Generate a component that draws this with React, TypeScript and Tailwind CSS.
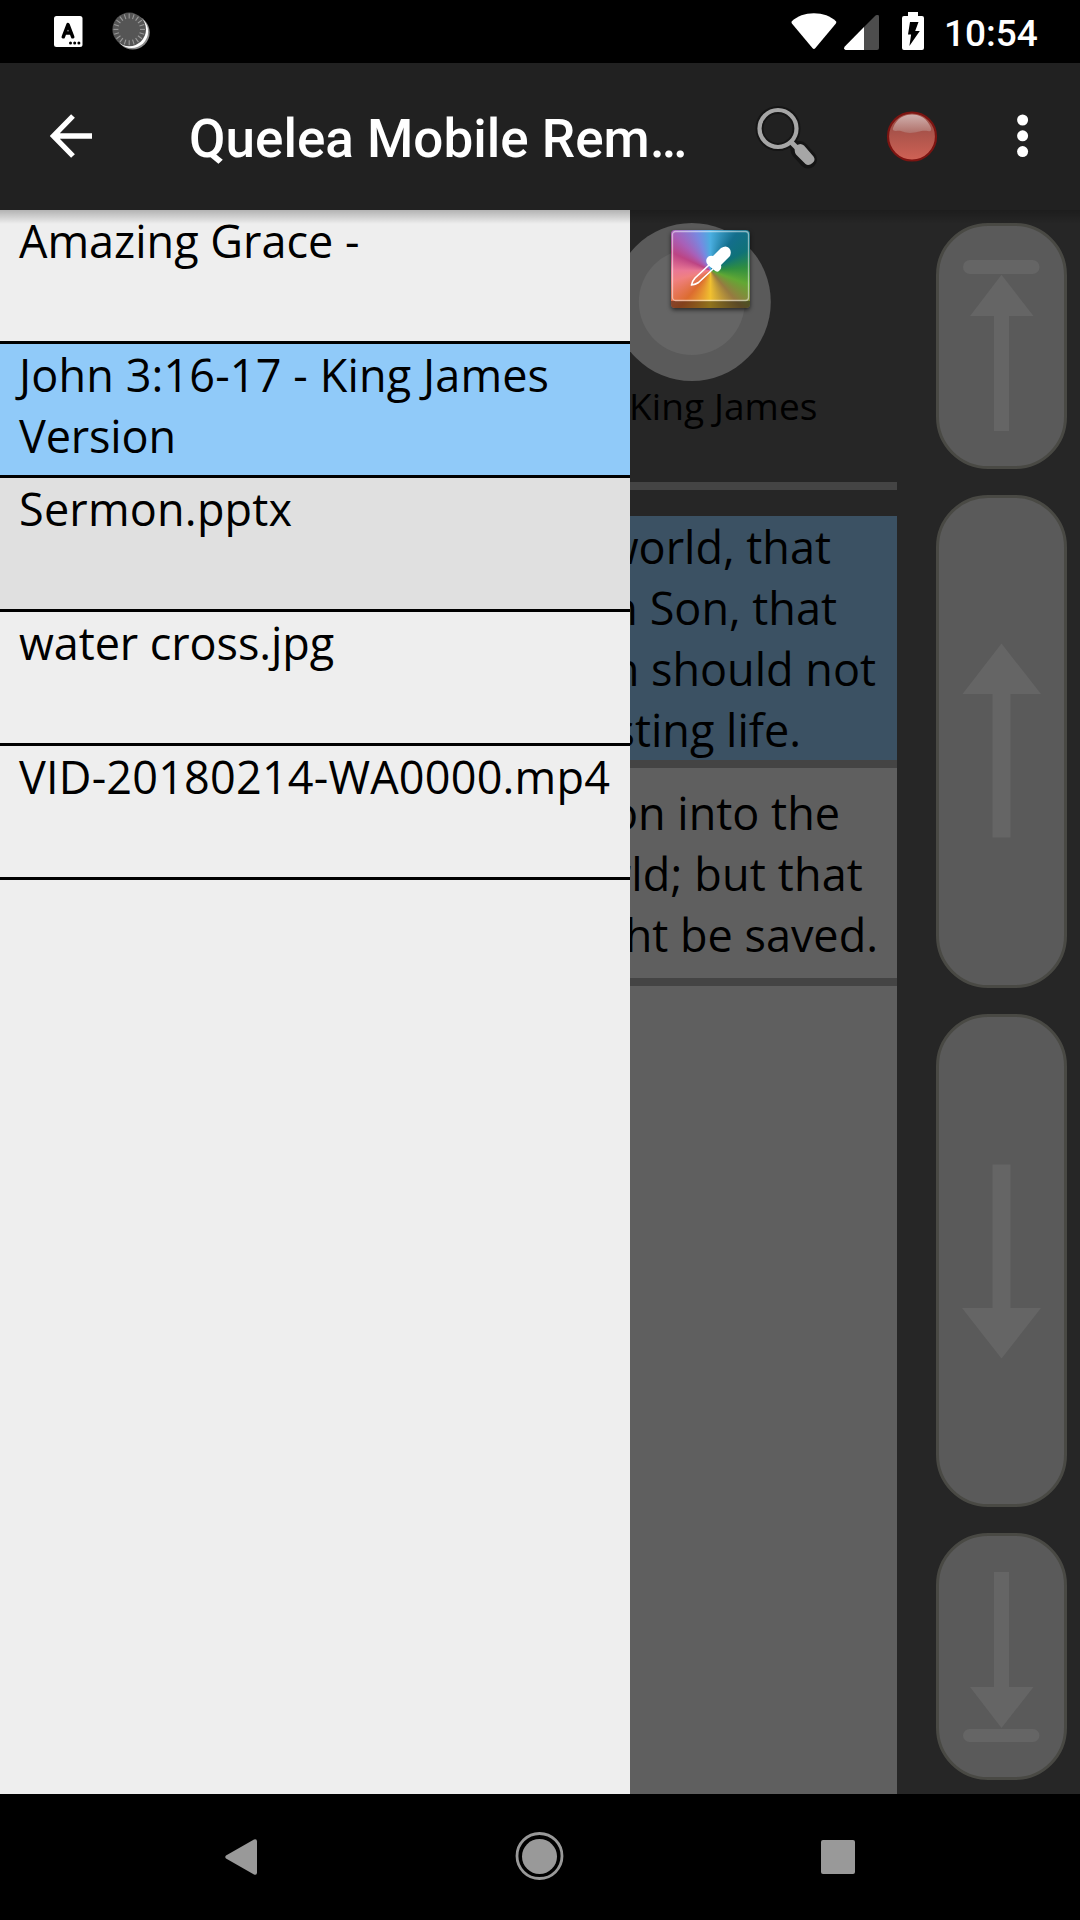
import React from "react";

const items = [
  { lines: [{ text: "Amazing Grace -", track: "tracking-normal" }], bg: "bg-[#eeeeee]" },
  {
    lines: [
      { text: "John 3:16-17 - King James", track: "tracking-[0.13px]" },
      { text: "Version", track: "tracking-[-0.15px]" },
    ],
    bg: "bg-[#90caf9]",
  },
  { lines: [{ text: "Sermon.pptx", track: "tracking-[0.2px]" }], bg: "bg-[#e0e0e0]" },
  { lines: [{ text: "water cross.jpg", track: "tracking-[-0.08px]" }], bg: "bg-[#eeeeee]" },
  { lines: [{ text: "VID-20180214-WA0000.mp4", track: "tracking-[0.2px]" }], bg: "bg-[#eeeeee]" },
];

const verse16 = [
  { text: "world, that", pad: "pr-[66px]" },
  { text: "own Son, that", pad: "pr-[60px]" },
  { text: "him should not", pad: "pr-[21px]" },
  { text: "lasting life.", pad: "pr-[96px]" },
];

const verse17 = [
  { text: "Son into the", pad: "pr-[57px]" },
  { text: "world; but that", pad: "pr-[34px] tracking-[0.15px]" },
  { text: "might be saved.", pad: "pr-[19px]" },
];

function Lines({ lines }: { lines: { text: string; pad: string }[] }) {
  return (
    <>
      {lines.map((l) => (
        <div key={l.text} className={"flex h-[61px] w-full justify-end whitespace-nowrap " + l.pad}>
          {l.text}
        </div>
      ))}
    </>
  );
}

function StatusBar() {
  return (
    <div className="flex h-[63px] shrink-0 items-start bg-black">
      <svg className="ml-[54px] mt-4" width="29" height="31" viewBox="0 0 29 31">
        <rect width="28.5" height="31" rx="2.5" fill="#fff" />
        <path d="M9.3 20.800 14 8.600l4.700 12.200M11 17h6" fill="none" stroke="#000" strokeWidth="3.500" strokeLinecap="round" strokeLinejoin="round" />
        <g fill="#000">
          <circle cx="16.500" cy="27" r="1.500" />
          <circle cx="20.700" cy="27" r="1.500" />
          <circle cx="24.900" cy="27" r="1.500" />
        </g>
      </svg>
      <svg className="ml-[28px] mt-[11px]" width="42" height="42" viewBox="0 0 42 42">
        <circle cx="21.700" cy="21.500" r="17" fill="#8c8c8c" />
        <circle cx="20.500" cy="20.500" r="16.600" fill="#fff" />
        <circle cx="18.200" cy="18.400" r="16.800" fill="#555" />
        <g stroke="#999" strokeWidth="1.100">
          {Array.from({ length: 20 }, (_, i) => (
            <path key={i} d="M18.200 2.600v5" transform={`rotate(${i * 18} 18.200 18.400)`} />
          ))}
        </g>
      </svg>
      <svg className="ml-auto mt-[13px]" width="46" height="37" viewBox="0 0 46 37">
        <path d="M.6 8.400C6.200 3 14 .2 22.900.2s16.700 2.800 22.300 8.200c.2 1.100 0 1.600-.5 2.300L24.200 35.300q-1.300 1.300-2.600 0L1.100 10.700C.6 10 .4 9.500.6 8.400Z" fill="#fff" />
      </svg>
      <svg className="ml-[7px] mt-[15px]" width="35" height="35" viewBox="0 0 35 35">
        <path d="M20 12 31.500.6Q35-1.500 35 2v31q0 2-2 2H20Z" fill="#4d4d4d" />
        <path d="M20 12v23H1.500Q-1 34 .8 31.500Z" fill="#fff" />
      </svg>
      <svg className="ml-[23px] mt-3" width="22" height="38" viewBox="0 0 22 38">
        <path d="M6 0h10v4h4q2 0 2 2v30q0 2-2 2H2q-2 0-2-2V6q0-2 2-2h4Z" fill="#fff" />
        <path d="M8 10h8.500l-3.300 9h4.600L7.400 34l1.700-11.500H6Z" fill="#000" />
      </svg>
      <div className="ml-[20px] mr-[41px] mt-[5px] w-[95px] whitespace-nowrap font-[Roboto] text-[37px] font-medium leading-[57px] text-white">10:54</div>
    </div>
  );
}

function TopBar() {
  return (
    <div className="flex h-[147px] shrink-0 items-center bg-[#212121]">
      <svg className="mb-[2px] ml-[50px]" width="42" height="44" viewBox="0 0 42 44">
        <path d="M42 22H5M23 2 3.500 22 23 42" fill="none" stroke="#fff" strokeWidth="5.300" />
      </svg>
      <div className="ml-[97px] mt-[5px] w-[510px] whitespace-nowrap font-[Roboto] text-[53px] font-medium leading-[70px] text-white">
        Quelea Mobile Rem…
      </div>
      <svg className="ml-[54px]" width="68" height="68" viewBox="0 0 68 68">
        <g stroke="#151515" fill="none">
          <circle cx="25" cy="25.500" r="18.500" strokeWidth="8" />
          <path d="m39 40 6 6" strokeWidth="10" />
          <path d="m46.500 47 8.500 9.500" strokeWidth="18" strokeLinecap="round" />
        </g>
        <g stroke="#a6a6a6" fill="none">
          <circle cx="25" cy="25.500" r="18.500" strokeWidth="4.200" />
          <path d="m37 38 8 8" strokeWidth="5" />
        </g>
        <path d="M42 43.500q5-4.500 9-1l9.500 11q2.500 3.500-1 6.500-4 3.500-7 1L43 51.500q-2-3-1-8Z" fill="#a6a6a6" />
      </svg>
      <svg className="ml-[64px]" width="54" height="54" viewBox="0 0 54 54">
        <defs>
          <linearGradient id="rec" x1="0" y1="0" x2="0" y2="1">
            <stop offset="0.300" stopColor="#a25048" />
            <stop offset="1" stopColor="#d06255" />
          </linearGradient>
          <linearGradient id="gloss" x1="0" y1="0" x2="0" y2="1">
            <stop offset="0" stopColor="#d0b0ae" />
            <stop offset="1" stopColor="#b07069" />
          </linearGradient>
        </defs>
        <circle cx="27" cy="26.500" r="24" fill="url(#rec)" stroke="#7c1411" strokeWidth="2.200" />
        <path d="M8 18C12 8 19 4.500 27 4.500S42 8 46 18q1 4-3 3c-8-1-10 2-18 2-7 0-8-3-14-2q-4 0-3-3Z" fill="url(#gloss)" />
      </svg>
      <svg className="mb-px ml-[77px]" width="14" height="46" viewBox="0 0 14 46">
        <g fill="#fff">
          <circle cx="6.600" cy="7" r="5.500" />
          <circle cx="6.600" cy="22.800" r="5.500" />
          <circle cx="6.600" cy="38.600" r="5.500" />
        </g>
      </svg>
    </div>
  );
}

function Drawer() {
  return (
    <div className="flex w-[630px] shrink-0 flex-col bg-[#eeeeee] text-[45px] leading-[61px] text-black">
      {items.map((it) => (
        <div key={it.lines[0].text} className={"h-[134px] border-b-[3px] border-black pl-[19px] " + it.bg}>
          {it.lines.map((l) => (
            <div key={l.text} className={"whitespace-nowrap " + l.track}>
              {l.text}
            </div>
          ))}
        </div>
      ))}
    </div>
  );
}

function Lyrics() {
  return (
    <div className="flex w-[267px] shrink-0 flex-col overflow-hidden bg-[#5f5f5f] text-[45px] leading-[61px] text-black">
      <div className="h-[306px] shrink-0 bg-[#262626]">
        <div className="relative h-[171px]">
          <svg className="absolute left-0 top-0" width="160" height="171" viewBox="0 0 160 171">
            <circle cx="61.800" cy="92" r="79" fill="#5a5a5a" />
            <circle cx="61.800" cy="92" r="53" fill="#656565" />
          </svg>
          <ColorPicker />
        </div>
        <div className="-ml-px h-[101px] whitespace-nowrap text-[37px] leading-[50px] tracking-[0.1px]">King James</div>
        <div className="h-2 bg-[#444444]" />
      </div>
      <div className="flex h-[252px] shrink-0 flex-col border-b-8 border-[#444444] bg-[#3b5163]">
        <Lines lines={verse16} />
      </div>
      <div className="flex h-[218px] shrink-0 flex-col justify-center border-b-8 border-[#444444]">
        <Lines lines={verse17} />
      </div>
    </div>
  );
}

function ColorPicker() {
  return (
    <div className="absolute left-[41px] top-[20px] h-[78px] w-[79px] overflow-hidden rounded-[4px] shadow-[0_2px_4px_rgba(0,0,0,0.6)]">
      <div className="h-full w-full bg-[conic-gradient(from_0deg_at_50%_52%,#4aaee0_0deg,#136e8c_35deg,#0f7278_60deg,#2f8e40_85deg,#62a834_110deg,#977a40_140deg,#f0c030_180deg,#dc6c30_220deg,#f08080_255deg,#ea7894_270deg,#bc4484_295deg,#a860b8_315deg,#7888e0_340deg,#4aaee0_360deg)]" />
      <div className="absolute bottom-0 left-0 h-[7px] w-full bg-black/40" />
      <svg className="absolute left-0 top-0" width="79" height="78" viewBox="0 0 79 78">
        <rect x="1.500" y="1.500" width="76" height="69" rx="3" fill="none" stroke="#fff" strokeOpacity=".5" strokeWidth="1.300" />
        <path d="M38 35 24 48q-3 3.500-3.500 7 4-.5 7-2.500L42 39" fill="none" stroke="#fff" strokeWidth="1.700" strokeLinejoin="round" />
        <path d="M36 28q2-3 6-2l8-8q5-3 8 0t1 8l-9 9q1 4-2 6-2 2-5-1l-6-5q-3-3-1-7Z" fill="#fff" />
      </svg>
    </div>
  );
}

function NavButtons() {
  const base = "w-[131px] shrink-0 overflow-hidden rounded-[52px] border-[3px] border-[#494944] bg-[#5a5a5a]";
  return (
    <div className="flex flex-1 flex-col gap-[26px] bg-[#262626] pl-[39px] pt-[13px]">
      <div className={base + " h-[246px]"}>
        <svg width="125" height="240" viewBox="939 226 125 240" fill="#656565">
          <rect x="963" y="260" width="76.500" height="14" rx="7" />
          <path d="M1001.500 274.700 1033.500 316H1009v115h-15V316h-24Z" />
        </svg>
      </div>
      <div className={base + " h-[493px]"}>
        <svg width="125" height="487" viewBox="939 498 125 487" fill="#656565">
          <path d="M1001.500 643.600 1041 694h-30.500v143.500h-18V694h-30Z" />
        </svg>
      </div>
      <div className={base + " h-[493px]"}>
        <svg width="125" height="487" viewBox="939 1017 125 487" fill="#656565">
          <path d="M1001.500 1358.500 1041 1308h-30.500v-143.500h-18V1308h-30.500Z" />
        </svg>
      </div>
      <div className={base + " h-[247px]"}>
        <svg width="125" height="241" viewBox="939 1536 125 241" fill="#656565">
          <path d="M1001.500 1728 1033.500 1687H1009v-115h-15v115h-24Z" />
          <rect x="963" y="1729" width="76.500" height="13" rx="6.500" />
        </svg>
      </div>
    </div>
  );
}

function SystemNav() {
  return (
    <div className="flex h-[126px] shrink-0 items-start bg-black">
      <svg className="ml-[224px] mt-[45px]" width="34" height="36" viewBox="0 0 34 36">
        <path d="M30 .5q3-1 3 2v31q0 3-3 2L2 19.500q-1.500-1.500 0-3Z" fill="#999" />
      </svg>
      <svg className="ml-[257px] mt-[37px]" width="50" height="50" viewBox="0 0 50 50">
        <circle cx="24.500" cy="25" r="22.500" fill="none" stroke="#999" strokeWidth="2.800" />
        <circle cx="24.500" cy="25.500" r="17.500" fill="#999" />
      </svg>
      <div className="ml-[256px] mt-[46px] h-[34px] w-[34px] rounded-[2px] bg-[#999]" />
    </div>
  );
}

export default function App() {
  return (
    <div className="flex h-[1920px] w-[1080px] flex-col overflow-hidden bg-black font-['Open_Sans',sans-serif]">
      <StatusBar />
      <TopBar />
      <div className="relative flex h-[1584px] shrink-0">
        <Drawer />
        <Lyrics />
        <NavButtons />
        <div className="absolute left-0 top-0 h-[14px] w-full bg-gradient-to-b from-black/25 to-transparent" />
      </div>
      <SystemNav />
    </div>
  );
}
